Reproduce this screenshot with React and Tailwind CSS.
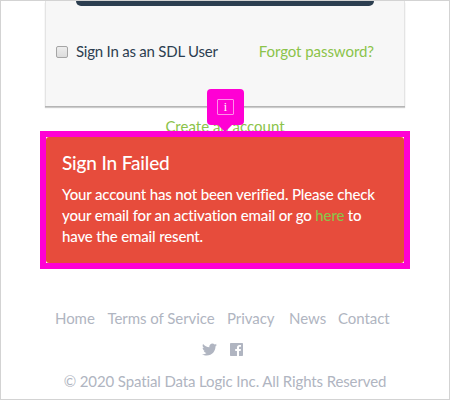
import React from 'react'
import { FaTwitter } from 'react-icons/fa'

const footerLinks = [
  { label: 'Home', href: '#home', width: 'w-[52.5px]' },
  { label: 'Terms of Service', href: '#terms', width: 'w-[119.5px]' },
  { label: 'Privacy', href: '#privacy', width: 'w-[62px]' },
  { label: 'News', href: '#news', width: 'w-[49px]' },
  { label: 'Contact', href: '#contact', width: 'w-[53px]' },
]

const FacebookIcon = () => (
  <svg viewBox="0 0 14 14" className="h-[13px] w-[13px]" fill="currentColor">
    <path d="M.8 0h12.4c.5 0 .8.3.8.8v12.4c0 .5-.3.8-.8.8H9.7V8.6h1.8l.3-2.1H9.7V5.1c0-.6.2-1 1-1h1.2V2.2c-.2 0-.9-.1-1.6-.1-1.7 0-2.8 1-2.8 2.8v1.6H5.6v2.1h1.9V14H.8a.8.8 0 0 1-.8-.8V.8C0 .3.3 0 .8 0Z" />
  </svg>
)

const InfoMarker = () => (
  <div className="absolute left-[167px] -top-[42px] flex h-[36px] w-[37px] items-center justify-center rounded bg-[#ff00d4]">
    <span className="flex h-4 w-[17px] items-center justify-center rounded-[1px] border border-[#ff8fea] font-['Liberation_Serif',serif] text-[12px] leading-none text-white">
      i
    </span>
    <svg viewBox="0 0 14 7" className="absolute left-[11px] top-[36px] h-[7px] w-[14px]" fill="#ff00d4">
      <path d="M0 0h14L7 7Z" />
    </svg>
  </div>
)

const App = () => {
  return (
    <div className="h-[400px] w-[450px] overflow-hidden border border-[#d3d3d3] bg-white font-['Lato',sans-serif] text-[15px] leading-[21px]">
      <div className="ml-[44px] h-[105px] w-[360px] border-x border-[#e4e4e4] bg-[#f7f7f7] shadow-[0_1px_0_#b5b5b5,0_2px_1px_rgba(0,0,0,0.2)]">
        <div className="mx-[30px] h-[5px] rounded-b-[6px] bg-[#2c3e50]" />
        <div className="flex items-center justify-between pl-[10px] pr-[30px] pt-[35px]">
          <label className="flex items-center tracking-[-0.22px] text-[#2c3e50]">
            <input
              type="checkbox"
              className="mr-2 h-3 w-3 appearance-none rounded-[2px] border border-[#a5a5a5] bg-linear-to-b from-[#ededed] to-[#dcdcdc]"
            />
            Sign In as an SDL User
          </label>
          <a href="#forgot" className="tracking-[-0.06px] text-[#8bc34a]">Forgot password?</a>
        </div>
      </div>

      <div className="h-[24px] pt-[10px] text-center">
        <a href="#create" className="text-[#8bc34a]">Create an account</a>
      </div>

      <div className="relative ml-[39px] mt-[1px] h-[138px] w-[370px] border-[6px] border-[#ff00d4] bg-white">
        <div className="h-full rounded-[3px] bg-[#e74c3c] px-4 pt-[14px] text-white">
          <h4 className="text-[19px] font-medium leading-[24px] tracking-[-0.15px]">Sign In Failed</h4>
          <p className="mt-[9px] font-medium tracking-[-0.15px] [font-variant-ligatures:none]">
            Your account has not been verified. Please check
            <br />
            your email for an activation email or go <a href="#resend" className="text-[#8bc34a]">here</a> to
            <br />
            have the email resent.
          </p>
        </div>
        <div className="absolute -left-[6px] -top-[6px]">
          <InfoMarker />
        </div>
      </div>

      <footer className="pt-[39px] text-[#b0b5c1]">
        <nav className="flex pl-[54px] tracking-[-0.05px]">
          {footerLinks.map((link) => (
            <a key={link.label} href={link.href} className={`${link.width} whitespace-nowrap`}>
              {link.label}
            </a>
          ))}
        </nav>
        <div className="mt-[10px] flex h-[21px] items-center pl-[201px]">
          <FaTwitter className="h-[15px] w-[15px]" />
          <span className="ml-[13px]">
            <FacebookIcon />
          </span>
        </div>
        <p className="mt-[11px] text-center tracking-[-0.12px]">© 2020 Spatial Data Logic Inc. All Rights Reserved</p>
      </footer>
    </div>
  )
}

export default App
